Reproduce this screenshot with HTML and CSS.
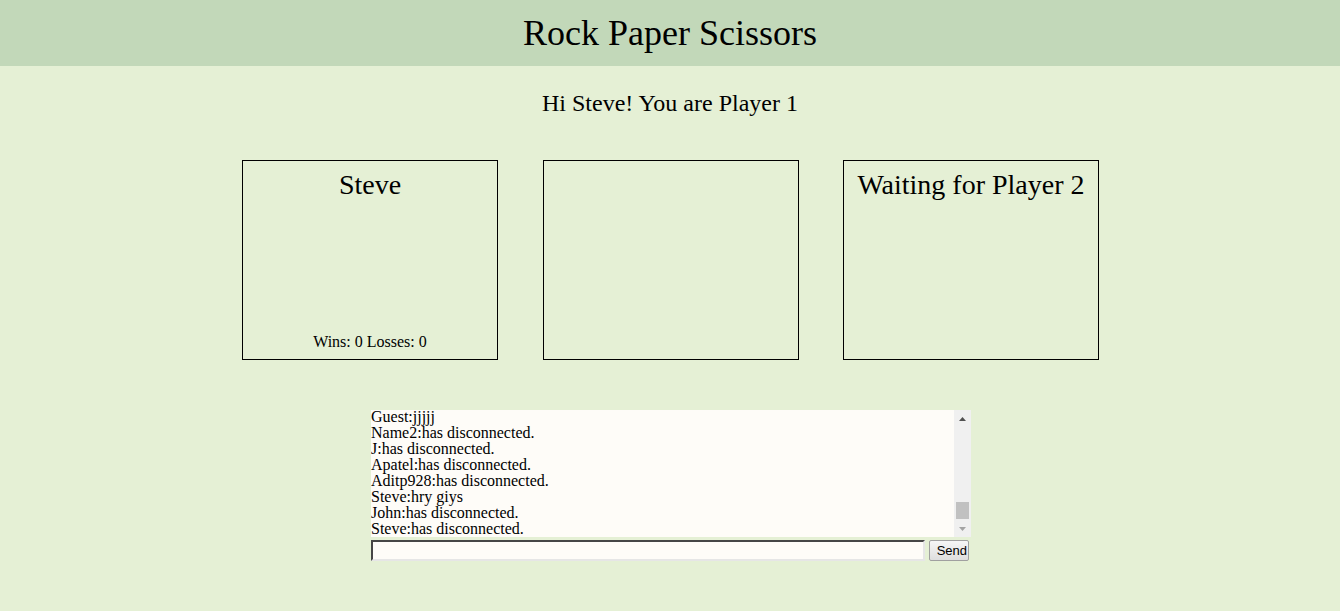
FILE: index.html
```html
<!DOCTYPE html>
<html>
<head>
<meta charset="utf-8">
<title>Rock Paper Scissors</title>
<link rel="stylesheet" href="styles.css">
</head>
<body>
<header class="top">
  <h1 class="title">Rock Paper Scissors</h1>
</header>
<main class="page">
  <p class="greeting">Hi Steve! You are Player 1</p>
  <section class="boards">
    <div class="box player">
      <h2 class="box-title">Steve</h2>
      <div class="score">Wins: 0 Losses: 0</div>
    </div>
    <div class="box middle"></div>
    <div class="box player">
      <h2 class="box-title">Waiting for Player 2</h2>
    </div>
  </section>
  <section class="chat">
    <div class="log-wrap">
      <div class="log">
        <div class="log-inner">
          <div>Steve:has connected.</div>
          <div>Guest:hello</div>
          <div>Name2:hi</div>
          <div>Guest:has disconnected.</div>
          <div>J:has connected.</div>
          <div>Apatel:hey</div>
          <div>Aditp928:hi all</div>
          <div>John:yo</div>
          <div>Name2:has disconnected.</div>
          <div>J:has disconnected.</div>
          <div>Guest:jjjjj</div>
          <div>Name2:has disconnected.</div>
          <div>J:has disconnected.</div>
          <div>Apatel:has disconnected.</div>
          <div>Aditp928:has disconnected.</div>
          <div>Steve:hry giys</div>
          <div>John:has disconnected.</div>
          <div>Steve:has disconnected.</div>
        </div>
      </div>
      <div class="scrollbar" aria-hidden="true">
        <div class="sb-btn">
          <svg width="7" height="4" viewBox="0 0 7 4"><path d="M0 4 L3.5 0 L7 4 Z" fill="#505050"/></svg>
        </div>
        <div class="sb-track"><div class="sb-thumb"></div></div>
        <div class="sb-btn">
          <svg width="7" height="4" viewBox="0 0 7 4"><path d="M0 0 L3.5 4 L7 0 Z" fill="#a3a3a3"/></svg>
        </div>
      </div>
    </div>
    <form class="send-row">
      <input class="msg" type="text">
      <button class="send" type="button">Send</button>
    </form>
  </section>
</main>
</body>
</html>
```
FILE: styles.css
```css
html, body {
  margin: 0;
  padding: 0;
}
body {
  background: #e5f0d5;
  font-family: "Liberation Serif", "Times New Roman", serif;
  color: #000;
  height: 611px;
  overflow: hidden;
}
.top {
  background: #c2d8b9;
  height: 66px;
  display: flex;
  align-items: center;
  justify-content: center;
}
.title {
  margin: 0;
  font-size: 36px;
  font-weight: normal;
  line-height: 40px;
}
.page {
  display: flex;
  flex-direction: column;
  align-items: center;
}
.greeting {
  margin: 24px 0 0 0;
  font-size: 24px;
  line-height: 27px;
}
.boards {
  margin-top: 43px;
  display: flex;
  padding-left: 1px;
}
.box {
  width: 254px;
  height: 198px;
  border: 1px solid #000;
  display: flex;
  flex-direction: column;
  align-items: center;
}
.middle {
  margin: 0 44px 0 45px;
}
.box-title {
  margin: 8px 0 0 0;
  font-size: 28px;
  font-weight: normal;
  line-height: 32px;
}
.score {
  margin-top: auto;
  margin-bottom: 8px;
  font-size: 16px;
  line-height: 18px;
}
.chat {
  margin-top: 50px;
  width: 600px;
  padding-left: 2px;
}
.log-wrap {
  display: flex;
  height: 127px;
  background: #fefcf8;
}
.log {
  flex: 1;
  overflow: hidden;
  display: flex;
  flex-direction: column-reverse;
  font-size: 16px;
  line-height: 16px;
}
.scrollbar {
  width: 17px;
  background: #f0f0f0;
  display: flex;
  flex-direction: column;
}
.sb-btn {
  height: 17px;
  display: flex;
  align-items: center;
  justify-content: center;
}
.sb-btn svg {
  display: block;
}
.sb-track {
  flex: 1;
  display: flex;
  flex-direction: column;
  justify-content: flex-end;
  padding: 0 2px 1px 2px;
}
.sb-thumb {
  height: 17px;
  background: #c1c1c1;
}
.send-row {
  margin: 3px 0 0 0;
  display: flex;
  gap: 4px;
  align-items: stretch;
}
.msg {
  width: 548px;
  height: 17px;
  margin: 0;
  padding: 0 1px;
  border: 2px inset #ececec;
  border-top-color: #9a9a9a;
  border-left-color: #9a9a9a;
  border-right-color: #e6e6e6;
  border-bottom-color: #e6e6e6;
  background: #fefcf8;
  font-family: "Liberation Sans", Arial, sans-serif;
  font-size: 13px;
}
.send {
  width: 40px;
  height: 21px;
  margin: 0;
  border: 1px solid #a0a0a0;
  border-radius: 2px;
  background: linear-gradient(#f6f6f6, #dedede);
  font-family: "Liberation Sans", Arial, sans-serif;
  font-size: 13px;
  color: #000;
  text-align: right;
  padding: 0 1px 0 0;
}
```
